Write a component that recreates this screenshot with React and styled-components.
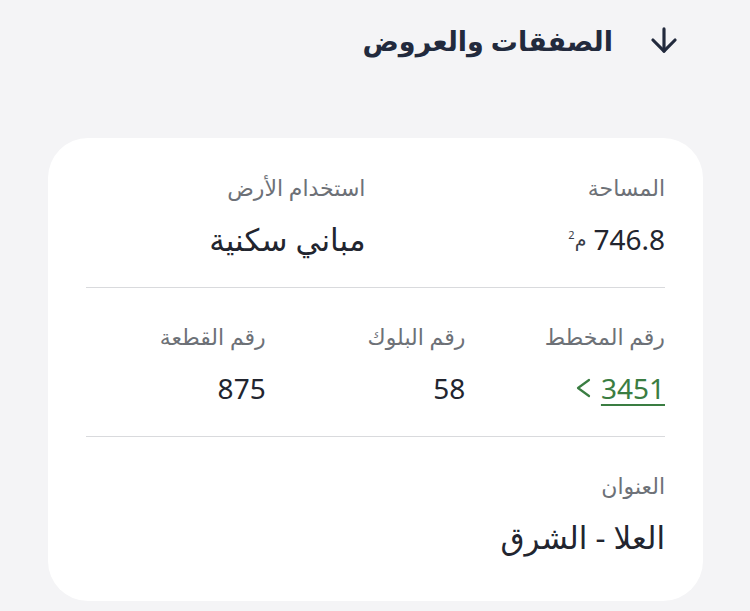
import React from 'react';
import styled, { createGlobalStyle } from 'styled-components';
import { ArrowDown } from 'lucide-react';

const GlobalStyle = createGlobalStyle`
    html, body {
        margin: 0;
        padding: 0;
        background: #f4f4f6;
    }
    body {
        font-family: "Noto Sans", "DejaVu Sans", sans-serif;
    }
`;

const Page = styled.div`
    direction: rtl;
    width: 750px;
    height: 611px;
    box-sizing: border-box;
    padding: 14px 47px 0 48px;
    overflow: hidden;
`;

const Header = styled.div`
    display: flex;
    align-items: center;
    gap: 32px;
    padding-right: 20px;
    height: 52px;
    color: #222a3d;

    > h2 {
        margin: 0;
        font-size: 27px;
        font-weight: 700;
    }
`;

const Card = styled.div`
    margin-top: 72px;
    background: #fff;
    border-radius: 40px;
    padding: 33px 38px 44px;
`;

const Row = styled.div`
    display: grid;
    grid-template-columns: repeat(${props => props.cols || 3}, 1fr);
    column-gap: 20px;
    padding: ${props => props.first ? '0' : '32px'} 0 ${props => props.last ? '0' : '28px'};
    border-bottom: ${props => props.last ? 'none' : '1px solid #d9dadd'};
`;

const Field = styled.div`
    display: flex;
    flex-direction: column;
    gap: 16px;
`;

const Label = styled.div`
    font-size: 22px;
    color: #6d7177;
    line-height: 32px;
    height: 32px;
`;

const Value = styled.div`
    display: flex;
    align-items: center;
    gap: 7px;
    font-size: ${props => props.ar ? '31px' : '28px'};
    color: #22252f;
    line-height: 40px;
    height: 40px;
`;

const Unit = styled.span`
    font-size: 19px;
    color: #3a3e4a;

    > sup {
        font-size: 11px;
        line-height: 0;
    }
`;

const Link = styled.a`
    display: flex;
    align-items: center;
    gap: 10px;
    color: #3a7d42;
    text-decoration: none;

    > span {
        text-decoration: underline;
        text-underline-offset: 5px;
        text-decoration-thickness: 2px;
    }
`;

const Chevron = () => (
    <svg width="16" height="20" viewBox="0 0 16 20" fill="none">
        <polyline points="14,2 3,10 14,18" stroke="currentColor" strokeWidth="2.2" strokeLinecap="round" strokeLinejoin="round" />
    </svg>
);

export default function App() {
    return (
        <>
            <GlobalStyle />
            <Page>
                <Header>
                    <ArrowDown size={38} strokeWidth={2} />
                    <h2>الصفقات والعروض</h2>
                </Header>
                <Card>
                    <Row first cols={2}>
                        <Field>
                            <Label>المساحة</Label>
                            <Value>
                                <span>746.8</span>
                                <Unit>م<sup>2</sup></Unit>
                            </Value>
                        </Field>
                        <Field>
                            <Label>استخدام الأرض</Label>
                            <Value ar>مباني سكنية</Value>
                        </Field>
                    </Row>
                    <Row cols={3}>
                        <Field>
                            <Label>رقم المخطط</Label>
                            <Value>
                                <Link href="#">
                                    <span>3451</span>
                                    <Chevron />
                                </Link>
                            </Value>
                        </Field>
                        <Field>
                            <Label>رقم البلوك</Label>
                            <Value>58</Value>
                        </Field>
                        <Field>
                            <Label>رقم القطعة</Label>
                            <Value>875</Value>
                        </Field>
                    </Row>
                    <Row last cols={1}>
                        <Field>
                            <Label>العنوان</Label>
                            <Value ar>العلا - الشرق</Value>
                        </Field>
                    </Row>
                </Card>
            </Page>
        </>
    );
}
